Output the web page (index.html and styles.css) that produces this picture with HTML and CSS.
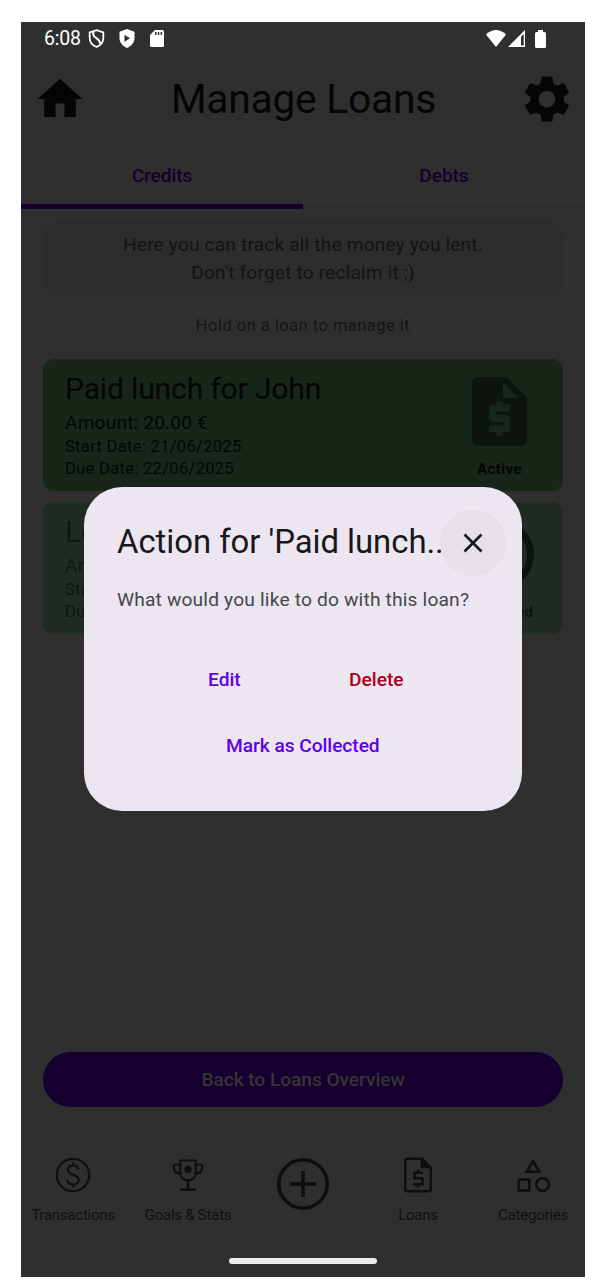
FILE: index.html
```html
<!DOCTYPE html>
<html lang="en">
<head>
<meta charset="utf-8">
<title>Manage Loans</title>
<link rel="stylesheet" href="styles.css">
</head>
<body>
<div class="phone">
  <div class="statusbar">
    <span class="clock">6:08</span>
    <svg class="s-shield" width="17" height="19" viewBox="0 0 16 19"><path d="M8 1.200 14.800 3.400V9c0 4.200-2.900 7.400-6.800 9C4.100 16.400 1.200 13.200 1.200 9V3.400z" fill="none" stroke="#fff" stroke-width="1.800"/><path d="M4.800 2.500v3c0 3.500 6.800 3.500 6.800 9" fill="none" stroke="#fff" stroke-width="2"/></svg>
    <svg class="s-play" width="16" height="19" viewBox="0 0 16 19"><path d="M8 0 15.500 2.800V9c0 4.500-3.200 8.200-7.500 10C3.700 17.200.5 13.500.5 9V2.800z" fill="#fff"/><path d="M5.500 5.800v7l5.500-3.500z" fill="#2f2f2f"/></svg>
    <svg class="s-card" width="14" height="17" viewBox="0 0 14 17"><path d="M5 0h7.500Q14 0 14 1.500v14q0 1.500-1.500 1.500h-11Q0 17 0 15.500V5z" fill="#fff"/><path d="M5 2h1.500v3H5zM7.800 2h1.500v3H7.800zM10.600 2h1.500v3h-1.500z" fill="#2f2f2f"/></svg>
    <span class="spacer"></span>
    <svg width="20" height="17" viewBox="0 0 20 17"><path d="M10 17 0 4.500Q4.500 0 10 0t10 4.500z" fill="#fff"/></svg>
    <svg class="s-signal" width="17" height="17" viewBox="0 0 17 17"><path d="M17 0v17H0z" fill="#fff"/><path d="M15.700 4v11.500h-2.700V6.700z" fill="#2f2f2f"/></svg>
    <svg class="s-batt" width="11" height="18" viewBox="0 0 11 18"><path d="M3 0h5v2h1.500Q11 2 11 3.500v13q0 1.500-1.500 1.500h-8Q0 18 0 16.500v-13Q0 2 1.500 2H3z" fill="#fff"/></svg>
  </div>

  <header class="header">
    <svg width="54" height="54" viewBox="0 0 24 24"><path d="M10 20v-6h4v6h5v-8h3L12 3 2 12h3v8z"/></svg>
    <h1>Manage Loans</h1>
    <svg width="54" height="54" viewBox="0 0 24 24"><path d="M19.430 12.980c.04-.32.070-.64.070-.98s-.03-.66-.07-.98l2.110-1.650c.19-.15.240-.42.120-.64l-2-3.460c-.12-.22-.39-.3-.61-.22l-2.490 1c-.52-.4-1.080-.73-1.690-.98l-.38-2.650C14.460 2.180 14.250 2 14 2h-4c-.25 0-.46.18-.49.420l-.38 2.650c-.61.25-1.170.59-1.690.98l-2.490-1c-.23-.09-.49 0-.61.22l-2 3.460c-.13.22-.07.49.12.64l2.110 1.650c-.04.32-.07.650-.07.980s.03.66.07.980l-2.110 1.650c-.19.15-.24.42-.12.64l2 3.460c.12.22.39.3.61.22l2.490-1c.52.4 1.080.73 1.690.98l.38 2.650c.03.24.24.42.49.420h4c.25 0 .46-.18.49-.42l.38-2.650c.61-.25 1.170-.59 1.690-.98l2.490 1c.23.09.49 0 .61-.22l2-3.460c.12-.22.070-.49-.12-.64zM12 15.700c-2.040 0-3.700-1.660-3.700-3.700s1.660-3.700 3.700-3.700 3.700 1.660 3.700 3.700-1.660 3.700-3.700 3.700z"/></svg>
  </header>

  <nav class="tabs">
    <div class="tab tab-active">Credits</div>
    <div class="tab">Debts</div>
  </nav>

  <main class="content">
    <p class="info">Here you can track all the money you lent.<br>Don't forget to reclaim it ;)</p>
    <p class="hint">Hold on a loan to manage it</p>

    <article class="loan">
      <div>
        <h2>Paid lunch for John</h2>
        <p class="amount">Amount: 20.00 €</p>
        <p class="date">Start Date: 21/06/2025</p>
        <p class="date">Due Date: 22/06/2025</p>
      </div>
      <div class="state">
        <svg width="83" height="83" viewBox="0 0 24 24"><path d="M14 2H6c-1.100 0-1.990.9-1.990 2L4 20c0 1.100.89 2 1.990 2H18c1.100 0 2-.9 2-2V8zM15 12h-4v1h3c.55 0 1 .45 1 1v3c0 .55-.45 1-1 1h-1v1h-2v-1H9v-2h4v-1h-3c-.55 0-1-.45-1-1v-3c0-.55.45-1 1-1h1V9h2v1h2zM13 8V3.500L17.500 8z"/></svg>
        <span>Active</span>
      </div>
    </article>

    <article class="loan loan-done">
      <div>
        <h2>Lo</h2>
        <p class="amount">Am</p>
        <p class="date">Sta</p>
        <p class="date">Du</p>
      </div>
      <div class="state">
        <svg width="83" height="83" viewBox="0 0 24 24"><path d="M12 2C6.480 2 2 6.480 2 12s4.480 10 10 10 10-4.480 10-10S17.520 2 12 2zm0 18c-4.410 0-8-3.590-8-8s3.590-8 8-8 8 3.590 8 8-3.590 8-8 8zm4.590-12.420L10 14.170l-2.590-2.580L6 13l4 4 8-8z"/></svg>
        <span>Collected</span>
      </div>
    </article>

    <div class="back">Back to Loans Overview</div>
  </main>

  <nav class="bottom">
    <div class="item">
      <svg width="36" height="36" viewBox="0 0 36 36" fill="none" stroke="#0e0e0e" stroke-width="2.200"><circle cx="18" cy="18" r="16.200"/><path d="M23.500 12.500C22.800 9.800 20.700 8.300 18 8.300c-3 0-5.200 1.900-5.200 4.500 0 5.800 11 4 11 10 0 3-2.600 4.800-5.700 4.800-3.200 0-5.200-1.700-5.900-4.600M18 5.500v3M18 27.500v3"/></svg>
      <span>Transactions</span>
    </div>
    <div class="item">
      <svg width="36" height="36" viewBox="0 0 36 36" fill="none" stroke="#0e0e0e" stroke-width="2.200"><path d="M10.300 3.500h15.400V16c0 4.300-3.200 7.500-7.700 7.500S10.300 20.300 10.300 16zM10.300 7.500H5.600q-2 0-2 2.500c0 4 2.800 6.500 7 7M25.700 7.500h4.700q2 0 2 2.500c0 4-2.800 6.500-7 7"/><path d="M18 23v9M10.300 32.700h15.400" stroke-width="2.600"/><circle cx="18" cy="12.500" r="3.700" fill="#0e0e0e" stroke="none"/></svg>
      <span>Goals &amp; Stats</span>
    </div>
    <div class="item add">
      <svg width="54" height="54" viewBox="0 0 54 54" fill="none" stroke="#0e0e0e" stroke-width="3.500"><circle cx="27" cy="27" r="24.200"/><path d="M27 14v26M14 27h26"/></svg>
    </div>
    <div class="item">
      <svg width="36" height="36" viewBox="0 0 36 36"><path d="M22 1.800H7.200q-2 0-2 2v28.400q0 2 2 2h21.600q2 0 2-2V10.600z" fill="none" stroke="#0e0e0e" stroke-width="2.400"/><path d="M20.500 1.500v9.800h11z" fill="#0e0e0e"/><path d="M23 15.700h-8.500v5.500h8v6H13M18 12.500v3M18 27v3.500" fill="none" stroke="#0e0e0e" stroke-width="2.500"/></svg>
      <span>Loans</span>
    </div>
    <div class="item">
      <svg width="36" height="36" viewBox="0 0 36 36" fill="none" stroke="#0e0e0e" stroke-width="2.600"><path d="m18 4.200 6.300 10.600H11.700zM3.800 22.500h10.500v11H3.800z"/><circle cx="27.600" cy="27.500" r="6.400"/></svg>
      <span>Categories</span>
    </div>
  </nav>
  <div class="pill"></div>

  <section class="dialog">
    <div class="dialog-head">
      <h3>Action for 'Paid lunch..</h3>
      <div class="close"><svg width="20" height="20" viewBox="0 0 20 20"><path d="m1.500 1.500 17 17m0-17-17 17" stroke="#18181c" stroke-width="2.600"/></svg></div>
    </div>
    <p class="question">What would you like to do with this loan?</p>
    <div class="actions">
      <span class="edit">Edit</span>
      <span class="delete">Delete</span>
    </div>
    <div class="collect">Mark as Collected</div>
  </section>
</div>
</body>
</html>
```
FILE: styles.css
```css
* { box-sizing: border-box; margin: 0; padding: 0; }
body {
  width: 613px;
  height: 1287px;
  padding: 22px 28px 10px 21px;
  background: #fff;
  font-family: Roboto, "Liberation Sans", sans-serif;
  overflow: hidden;
}
svg { display: block; flex: none; }
h1, h2, h3 { font-weight: 400; white-space: nowrap; }
.phone {
  position: relative;
  width: 564px;
  height: 1255px;
  display: flex;
  flex-direction: column;
  background: #2f2f2f;
  color: #050505;
}
.statusbar {
  height: 33px;
  padding: 0 39px 0 23px;
  display: flex;
  align-items: center;
  color: #fff;
}
.clock { width: 44px; font-size: 19.500px; letter-spacing: -0.200px; }
.s-play { margin-left: 13.500px; }
.s-card { margin-left: 15.500px; }
.s-signal { margin-left: 2px; }
.s-batt { margin-left: 10px; }
.spacer { flex: 1; }
.header {
  height: 88px;
  padding: 0 11px 0 12px;
  display: flex;
  align-items: center;
  justify-content: space-between;
  fill: #050505;
}
.header h1 { font-size: 40.800px; line-height: 50px; letter-spacing: -0.270px; }
.tabs {
  height: 66px;
  display: flex;
  border-bottom: 1px solid #2f2f2f;
  box-shadow: inset 0 -1px #292929;
}
.tab {
  flex: 1;
  height: 66px;
  padding-top: 20px;
  line-height: 26px;
  text-align: center;
  font-size: 19.200px;
  font-weight: 500;
  letter-spacing: -0.120px;
  color: #150030;
}
.tab-active { border-bottom: 5px solid #150030; }
.content {
  flex: 1;
  padding: 11px 22px 0;
  display: flex;
  flex-direction: column;
}
.info {
  height: 77px;
  padding-top: 11px;
  border-radius: 16px;
  background: #2c2d2f;
  color: #131313;
  text-align: center;
  font-size: 19.200px;
  line-height: 27.500px;
  letter-spacing: 0.140px;
}
.hint {
  padding: 18px 0 22px;
  text-align: center;
  font-size: 16.500px;
  line-height: 22px;
  letter-spacing: 0.470px;
  color: #151515;
}
.loan {
  height: 132px;
  margin-bottom: 11px;
  padding: 11px 22px 0;
  display: flex;
  justify-content: space-between;
  border-radius: 11px;
  background: #172618;
}
.loan h2 {
  padding-bottom: 2px;
  font-size: 30.200px;
  line-height: 37px;
  letter-spacing: -0.220px;
}
.amount { font-size: 19.200px; line-height: 27px; letter-spacing: 0.140px; }
.date { font-size: 16.500px; line-height: 22px; letter-spacing: 0.320px; }
.loan-done { background: #202b22; color: #101611; }
.state {
  width: 83px;
  display: flex;
  flex-direction: column;
  align-items: center;
  fill: #0c140d;
}
.state span {
  margin-top: 5px;
  font-size: 15.100px;
  line-height: 22px;
  font-weight: 700;
  letter-spacing: 0.400px;
}
.back {
  height: 55px;
  margin-top: auto;
  margin-bottom: 30px;
  border-radius: 28px;
  background: #150030;
  color: #353535;
  text-align: center;
  font-size: 19.200px;
  line-height: 55px;
  font-weight: 500;
  letter-spacing: -0.070px;
}
.bottom { height: 108px; display: flex; justify-content: space-between; padding: 20px 0 0; }
.item {
  width: 104px;
  display: flex;
  flex-direction: column;
  align-items: center;
  color: #101010;
}
.item span {
  margin-top: 12px;
  font-size: 15.100px;
  line-height: 20px;
  letter-spacing: -0.280px;
  white-space: nowrap;
}
.pill {
  align-self: center;
  width: 148px;
  height: 6px;
  margin: 13px 0 13.500px;
  border-radius: 3px;
  background: #ececec;
}
.dialog {
  position: absolute;
  left: 63px;
  top: 465.400px;
  width: 438px;
  height: 324px;
  padding: 22.500px 16px 0 33px;
  border-radius: 38px;
  background: #ebe6ef;
}
.dialog-head { display: flex; align-items: center; justify-content: space-between; }
.dialog h3 {
  width: 323px;
  padding-bottom: 2px;
  font-size: 32.900px;
  line-height: 44px;
  letter-spacing: -0.050px;
  color: #18181c;
}
.close {
  flex: none;
  width: 66px;
  height: 66px;
  border-radius: 50%;
  background: #e5e1e6;
  display: grid;
  place-items: center;
}
.question {
  margin-top: 10.500px;
  font-size: 19.200px;
  line-height: 28px;
  letter-spacing: 0.170px;
  color: #46464b;
  white-space: nowrap;
}
.actions {
  margin: 51.500px 0 0 91px;
  display: flex;
  font-size: 19.200px;
  line-height: 28px;
  font-weight: 500;
}
.edit { width: 141px; color: #6000ea; }
.delete { color: #b00020; }
.collect {
  margin: 38px 0 0 109px;
  font-size: 19.200px;
  line-height: 28px;
  font-weight: 500;
  letter-spacing: -0.060px;
  color: #6000ea;
}
```
